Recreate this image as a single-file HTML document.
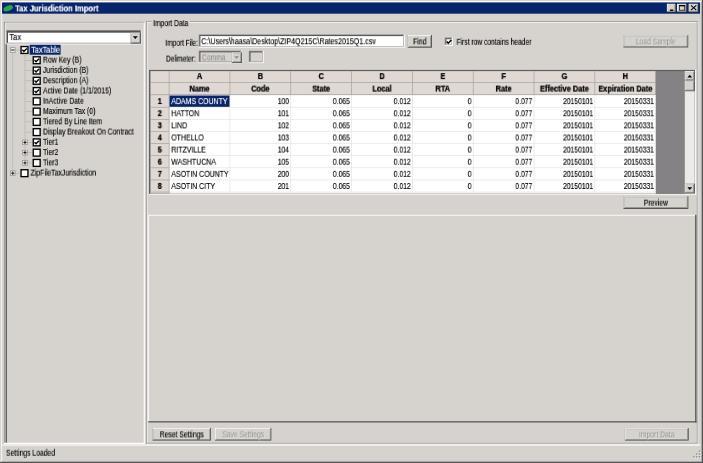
<!DOCTYPE html>
<html><head><meta charset="utf-8"><title>Tax Jurisdiction Import</title>
<style>
html,body{margin:0;padding:0;}
body{width:703px;height:463px;overflow:hidden;background:#d6d3ce;position:relative;font-family:"Liberation Sans",sans-serif;font-size:8.2px;color:#000;line-height:10px;}
svg.bgd{position:absolute;left:0;top:0;}
.t{position:absolute;left:0;top:0;white-space:nowrap;height:10px;line-height:10px;will-change:transform;text-shadow:0 0 0 rgba(0,0,0,.45);}
.b{font-weight:bold;-webkit-text-stroke:0.2px #000;}
.dis{color:#8f8d89;text-shadow:0.5px 0.5px 0 rgba(255,255,255,.6);}
</style></head>
<body>
<svg class="bgd" width="703" height="463" viewBox="0 0 703 463">
<rect x="0.00" y="0.00" width="703.00" height="463.00" fill="#d6d3ce"/>
<rect x="1.30" y="1.10" width="700.40" height="1.35" fill="#ffffff"/>
<rect x="1.30" y="1.10" width="0.80" height="460.60" fill="#ffffff"/>
<rect x="702.10" y="0.00" width="0.90" height="463.00" fill="#424142"/>
<rect x="0.00" y="462.10" width="703.00" height="0.90" fill="#424142"/>
<rect x="701.50" y="1.20" width="0.60" height="460.90" fill="#848284"/>
<rect x="1.30" y="461.50" width="700.80" height="0.60" fill="#848284"/>
<rect x="2.05" y="2.45" width="697.95" height="11.25" fill="#08246b"/>
<ellipse cx="8.2" cy="8.3" rx="5" ry="2.6" transform="rotate(-22 8.2 8.3)" fill="#1fa84a"/>
<rect x="666.90" y="3.80" width="9.10" height="8.50" fill="#383738"/>
<rect x="666.90" y="3.80" width="8.30" height="7.70" fill="#ffffff"/>
<rect x="667.80" y="4.70" width="7.40" height="6.80" fill="#7b797b"/>
<rect x="667.80" y="4.70" width="6.74" height="6.14" fill="#d6d3ce"/>
<rect x="670.00" y="9.50" width="3.30" height="1.40" fill="#000"/>
<rect x="677.10" y="3.80" width="9.80" height="8.50" fill="#383738"/>
<rect x="677.10" y="3.80" width="9.00" height="7.70" fill="#ffffff"/>
<rect x="678.00" y="4.70" width="8.10" height="6.80" fill="#7b797b"/>
<rect x="678.00" y="4.70" width="7.44" height="6.14" fill="#d6d3ce"/>
<rect x="679.5" y="5.7" width="5.2" height="4.5" fill="none" stroke="#000" stroke-width="0.7"/>
<rect x="679.15" y="5.00" width="5.90" height="1.30" fill="#000"/>
<rect x="688.70" y="3.80" width="9.80" height="8.50" fill="#383738"/>
<rect x="688.70" y="3.80" width="9.00" height="7.70" fill="#ffffff"/>
<rect x="689.60" y="4.70" width="8.10" height="6.80" fill="#7b797b"/>
<rect x="689.60" y="4.70" width="7.44" height="6.14" fill="#d6d3ce"/>
<path d="M691 5.4L696.3 10.2M696.3 5.4L691 10.2" stroke="#000" stroke-width="1.05"/>
<rect x="4.60" y="22.56" width="139.00" height="0.66" fill="#f4f3f1"/>
<rect x="4.86" y="22.50" width="0.76" height="21.30" fill="#f0efec"/>
<rect x="3.90" y="21.90" width="140.70" height="0.66" fill="#9c9a97"/>
<rect x="3.90" y="21.90" width="0.96" height="421.70" fill="#9a9896"/>
<rect x="5.60" y="43.80" width="1.30" height="399.00" fill="#5a595a"/>
<rect x="143.70" y="22.50" width="1.10" height="421.50" fill="#ffffff"/>
<rect x="3.90" y="442.80" width="140.90" height="1.20" fill="#ffffff"/>
<rect x="6.30" y="30.30" width="135.10" height="14.10" fill="#ffffff"/>
<rect x="6.30" y="30.30" width="134.15" height="13.15" fill="#7b797b"/>
<rect x="7.05" y="31.05" width="133.40" height="12.40" fill="#d6d3ce"/>
<rect x="7.05" y="31.05" width="132.74" height="11.74" fill="#4a494a"/>
<rect x="8.00" y="32.00" width="131.79" height="10.79" fill="#ffffff"/>
<rect x="6.30" y="30.30" width="134.44" height="0.90" fill="#7b797b"/>
<rect x="6.96" y="31.20" width="133.78" height="1.50" fill="#555455"/>
<rect x="130.60" y="32.70" width="10.40" height="10.80" fill="#383738"/>
<rect x="130.60" y="32.70" width="9.60" height="10.00" fill="#ffffff"/>
<rect x="131.50" y="33.60" width="8.70" height="9.10" fill="#7b797b"/>
<rect x="131.50" y="33.60" width="8.04" height="8.44" fill="#d6d3ce"/>
<polygon points="132.80,36.30 137.80,36.30 135.30,39.10" fill="#000"/>
<rect x="12.50" y="52.50" width="0.60" height="118.18" fill="#b4b1ac"/>
<rect x="24.70" y="54.50" width="0.60" height="105.92" fill="#b4b1ac"/>
<rect x="15.30" y="49.70" width="5.10" height="0.60" fill="#b4b1ac"/>
<rect x="10.50" y="47.70" width="4.6" height="4.6" fill="#f2f1ee" stroke="#8a8886" stroke-width="0.7"/>
<rect x="11.20" y="49.55" width="3.20" height="0.90" fill="#000"/>
<rect x="21.05" y="46.55" width="6.9" height="6.9" fill="#fff" stroke="#000" stroke-width="1.35"/>
<path d="M22.32 49.82L23.84 51.43L26.78 48.39" stroke="#000" stroke-width="1.42" fill="none"/>
<rect x="29.70" y="44.80" width="30.90" height="9.90" fill="#08246b"/>
<rect x="25.30" y="59.97" width="7.30" height="0.60" fill="#b4b1ac"/>
<rect x="33.25" y="56.81" width="6.9" height="6.9" fill="#fff" stroke="#000" stroke-width="1.35"/>
<path d="M34.52 60.08L36.04 61.70L38.98 58.66" stroke="#000" stroke-width="1.42" fill="none"/>
<rect x="25.30" y="70.23" width="7.30" height="0.60" fill="#b4b1ac"/>
<rect x="33.25" y="67.08" width="6.9" height="6.9" fill="#fff" stroke="#000" stroke-width="1.35"/>
<path d="M34.52 70.34L36.04 71.96L38.98 68.92" stroke="#000" stroke-width="1.42" fill="none"/>
<rect x="25.30" y="80.50" width="7.30" height="0.60" fill="#b4b1ac"/>
<rect x="33.25" y="77.35" width="6.9" height="6.9" fill="#fff" stroke="#000" stroke-width="1.35"/>
<path d="M34.52 80.61L36.04 82.22L38.98 79.19" stroke="#000" stroke-width="1.42" fill="none"/>
<rect x="25.30" y="90.76" width="7.30" height="0.60" fill="#b4b1ac"/>
<rect x="33.25" y="87.61" width="6.9" height="6.9" fill="#fff" stroke="#000" stroke-width="1.35"/>
<path d="M34.52 90.88L36.04 92.49L38.98 89.45" stroke="#000" stroke-width="1.42" fill="none"/>
<rect x="25.30" y="101.03" width="7.30" height="0.60" fill="#b4b1ac"/>
<rect x="33.25" y="97.88" width="6.9" height="6.9" fill="#fff" stroke="#000" stroke-width="1.35"/>
<rect x="25.30" y="111.29" width="7.30" height="0.60" fill="#b4b1ac"/>
<rect x="33.25" y="108.14" width="6.9" height="6.9" fill="#fff" stroke="#000" stroke-width="1.35"/>
<rect x="25.30" y="121.56" width="7.30" height="0.60" fill="#b4b1ac"/>
<rect x="33.25" y="118.41" width="6.9" height="6.9" fill="#fff" stroke="#000" stroke-width="1.35"/>
<rect x="25.30" y="131.82" width="7.30" height="0.60" fill="#b4b1ac"/>
<rect x="33.25" y="128.67" width="6.9" height="6.9" fill="#fff" stroke="#000" stroke-width="1.35"/>
<rect x="25.30" y="142.08" width="7.30" height="0.60" fill="#b4b1ac"/>
<rect x="22.70" y="140.08" width="4.6" height="4.6" fill="#f2f1ee" stroke="#8a8886" stroke-width="0.7"/>
<rect x="23.40" y="141.94" width="3.20" height="0.90" fill="#000"/>
<rect x="24.55" y="140.78" width="0.90" height="3.20" fill="#000"/>
<rect x="33.25" y="138.94" width="6.9" height="6.9" fill="#fff" stroke="#000" stroke-width="1.35"/>
<path d="M34.52 142.20L36.04 143.81L38.98 140.77" stroke="#000" stroke-width="1.42" fill="none"/>
<rect x="25.30" y="152.35" width="7.30" height="0.60" fill="#b4b1ac"/>
<rect x="22.70" y="150.35" width="4.6" height="4.6" fill="#f2f1ee" stroke="#8a8886" stroke-width="0.7"/>
<rect x="23.40" y="152.20" width="3.20" height="0.90" fill="#000"/>
<rect x="24.55" y="151.05" width="0.90" height="3.20" fill="#000"/>
<rect x="33.25" y="149.20" width="6.9" height="6.9" fill="#fff" stroke="#000" stroke-width="1.35"/>
<rect x="25.30" y="162.62" width="7.30" height="0.60" fill="#b4b1ac"/>
<rect x="22.70" y="160.62" width="4.6" height="4.6" fill="#f2f1ee" stroke="#8a8886" stroke-width="0.7"/>
<rect x="23.40" y="162.47" width="3.20" height="0.90" fill="#000"/>
<rect x="24.55" y="161.32" width="0.90" height="3.20" fill="#000"/>
<rect x="33.25" y="159.47" width="6.9" height="6.9" fill="#fff" stroke="#000" stroke-width="1.35"/>
<rect x="15.30" y="172.88" width="5.10" height="0.60" fill="#b4b1ac"/>
<rect x="10.50" y="170.88" width="4.6" height="4.6" fill="#f2f1ee" stroke="#8a8886" stroke-width="0.7"/>
<rect x="11.20" y="172.73" width="3.20" height="0.90" fill="#000"/>
<rect x="12.35" y="171.58" width="0.90" height="3.20" fill="#000"/>
<rect x="21.05" y="169.73" width="6.9" height="6.9" fill="#fff" stroke="#000" stroke-width="1.35"/>
<rect x="146.76" y="21.96" width="551.40" height="0.66" fill="#ffffff"/>
<rect x="146.76" y="21.96" width="0.66" height="422.20" fill="#ffffff"/>
<rect x="146.76" y="443.50" width="551.40" height="0.66" fill="#ffffff"/>
<rect x="697.50" y="21.96" width="0.66" height="422.20" fill="#ffffff"/>
<rect x="146.10" y="21.30" width="551.40" height="0.66" fill="#908e8b"/>
<rect x="146.10" y="21.30" width="0.66" height="422.20" fill="#908e8b"/>
<rect x="146.10" y="442.84" width="551.40" height="0.66" fill="#908e8b"/>
<rect x="696.84" y="21.30" width="0.66" height="422.20" fill="#908e8b"/>
<rect x="151.50" y="20.00" width="38.50" height="4.00" fill="#d6d3ce"/>
<rect x="198.70" y="34.40" width="206.10" height="13.20" fill="#ffffff"/>
<rect x="198.70" y="34.40" width="205.15" height="12.25" fill="#7b797b"/>
<rect x="199.45" y="35.15" width="204.40" height="11.50" fill="#d6d3ce"/>
<rect x="199.45" y="35.15" width="203.74" height="10.84" fill="#4a494a"/>
<rect x="200.40" y="36.10" width="202.79" height="9.89" fill="#ffffff"/>
<rect x="407.80" y="35.00" width="24.10" height="12.60" fill="#383738"/>
<rect x="407.80" y="35.00" width="23.30" height="11.80" fill="#ffffff"/>
<rect x="408.70" y="35.90" width="22.40" height="10.90" fill="#7b797b"/>
<rect x="408.70" y="35.90" width="21.74" height="10.24" fill="#d6d3ce"/>
<rect x="444.70" y="37.50" width="8.30" height="8.30" fill="#ffffff"/>
<rect x="444.70" y="37.50" width="7.35" height="7.35" fill="#7b797b"/>
<rect x="445.45" y="38.25" width="6.60" height="6.60" fill="#d6d3ce"/>
<rect x="445.45" y="38.25" width="5.94" height="5.94" fill="#4a494a"/>
<rect x="446.40" y="39.20" width="4.99" height="4.99" fill="#ffffff"/>
<path d="M446.65 41.50L448.25 43.20L451.35 40.00" stroke="#000" stroke-width="1.50" fill="none"/>
<rect x="623.40" y="35.30" width="64.80" height="12.10" fill="#383738"/>
<rect x="623.40" y="35.30" width="64.00" height="11.30" fill="#ffffff"/>
<rect x="624.30" y="36.20" width="63.10" height="10.40" fill="#7b797b"/>
<rect x="624.30" y="36.20" width="62.44" height="9.74" fill="#d6d3ce"/>
<rect x="198.70" y="50.60" width="43.50" height="12.60" fill="#ffffff"/>
<rect x="198.70" y="50.60" width="42.55" height="11.65" fill="#7b797b"/>
<rect x="199.45" y="51.35" width="41.80" height="10.90" fill="#d6d3ce"/>
<rect x="199.45" y="51.35" width="41.14" height="10.24" fill="#4a494a"/>
<rect x="200.40" y="52.30" width="40.19" height="9.29" fill="#d6d3ce"/>
<rect x="231.90" y="52.40" width="10.10" height="10.60" fill="#383738"/>
<rect x="231.90" y="52.40" width="9.30" height="9.80" fill="#ffffff"/>
<rect x="232.80" y="53.30" width="8.40" height="8.90" fill="#7b797b"/>
<rect x="232.80" y="53.30" width="7.74" height="8.24" fill="#d6d3ce"/>
<polygon points="234.30,56.35 238.90,56.35 236.60,58.85" fill="#8c8a86"/>
<rect x="248.80" y="50.70" width="14.90" height="12.40" fill="#ffffff"/>
<rect x="248.80" y="50.70" width="13.95" height="11.45" fill="#7b797b"/>
<rect x="249.55" y="51.45" width="13.20" height="10.70" fill="#d6d3ce"/>
<rect x="249.55" y="51.45" width="12.54" height="10.04" fill="#4a494a"/>
<rect x="250.50" y="52.40" width="11.59" height="9.09" fill="#d6d3ce"/>
<rect x="149.10" y="193.60" width="547.20" height="1.20" fill="#f6f5f3"/>
<rect x="695.00" y="69.90" width="1.30" height="124.90" fill="#f6f5f3"/>
<rect x="149.00" y="69.90" width="546.00" height="123.80" fill="#605e60"/>
<rect x="150.50" y="71.15" width="544.50" height="122.55" fill="#848284"/>
<rect x="150.50" y="71.15" width="505.16" height="23.95" fill="#dfd8d3"/>
<rect x="150.50" y="95.10" width="18.60" height="98.50" fill="#dfd8d3"/>
<rect x="169.10" y="95.10" width="486.56" height="98.50" fill="#ffffff"/>
<rect x="150.50" y="82.17" width="505.16" height="0.66" fill="#a29f9b"/>
<rect x="150.50" y="94.17" width="505.16" height="0.66" fill="#a29f9b"/>
<rect x="168.77" y="71.15" width="0.66" height="23.95" fill="#a29f9b"/>
<rect x="229.59" y="71.15" width="0.66" height="23.95" fill="#a29f9b"/>
<rect x="290.41" y="71.15" width="0.66" height="23.95" fill="#a29f9b"/>
<rect x="351.23" y="71.15" width="0.66" height="23.95" fill="#a29f9b"/>
<rect x="412.05" y="71.15" width="0.66" height="23.95" fill="#a29f9b"/>
<rect x="472.87" y="71.15" width="0.66" height="23.95" fill="#a29f9b"/>
<rect x="533.69" y="71.15" width="0.66" height="23.95" fill="#a29f9b"/>
<rect x="594.51" y="71.15" width="0.66" height="23.95" fill="#a29f9b"/>
<rect x="655.33" y="71.15" width="0.66" height="23.95" fill="#a29f9b"/>
<rect x="150.50" y="106.89" width="18.60" height="0.66" fill="#a29f9b"/>
<rect x="169.10" y="106.89" width="486.56" height="0.66" fill="#e6e1dd"/>
<rect x="150.50" y="119.01" width="18.60" height="0.66" fill="#a29f9b"/>
<rect x="169.10" y="119.01" width="486.56" height="0.66" fill="#e6e1dd"/>
<rect x="150.50" y="131.13" width="18.60" height="0.66" fill="#a29f9b"/>
<rect x="169.10" y="131.13" width="486.56" height="0.66" fill="#e6e1dd"/>
<rect x="150.50" y="143.25" width="18.60" height="0.66" fill="#a29f9b"/>
<rect x="169.10" y="143.25" width="486.56" height="0.66" fill="#e6e1dd"/>
<rect x="150.50" y="155.37" width="18.60" height="0.66" fill="#a29f9b"/>
<rect x="169.10" y="155.37" width="486.56" height="0.66" fill="#e6e1dd"/>
<rect x="150.50" y="167.49" width="18.60" height="0.66" fill="#a29f9b"/>
<rect x="169.10" y="167.49" width="486.56" height="0.66" fill="#e6e1dd"/>
<rect x="150.50" y="179.61" width="18.60" height="0.66" fill="#a29f9b"/>
<rect x="169.10" y="179.61" width="486.56" height="0.66" fill="#e6e1dd"/>
<rect x="150.50" y="191.73" width="18.60" height="0.66" fill="#a29f9b"/>
<rect x="169.10" y="191.73" width="486.56" height="0.66" fill="#e6e1dd"/>
<rect x="168.77" y="95.10" width="0.66" height="98.50" fill="#a29f9b"/>
<rect x="229.59" y="95.10" width="0.66" height="98.50" fill="#e6e1dd"/>
<rect x="290.41" y="95.10" width="0.66" height="98.50" fill="#e6e1dd"/>
<rect x="351.23" y="95.10" width="0.66" height="98.50" fill="#e6e1dd"/>
<rect x="412.05" y="95.10" width="0.66" height="98.50" fill="#e6e1dd"/>
<rect x="472.87" y="95.10" width="0.66" height="98.50" fill="#e6e1dd"/>
<rect x="533.69" y="95.10" width="0.66" height="98.50" fill="#e6e1dd"/>
<rect x="594.51" y="95.10" width="0.66" height="98.50" fill="#e6e1dd"/>
<rect x="655.33" y="95.10" width="0.66" height="98.50" fill="#e6e1dd"/>
<rect x="169.50" y="95.50" width="60.02" height="11.32" fill="#08246b"/>
<rect x="684.80" y="71.15" width="9.90" height="122.55" fill="#eceae7"/>
<rect x="684.80" y="71.15" width="9.90" height="9.45" fill="#383738"/>
<rect x="684.80" y="71.15" width="9.10" height="8.65" fill="#ffffff"/>
<rect x="685.70" y="72.05" width="8.20" height="7.75" fill="#7b797b"/>
<rect x="685.70" y="72.05" width="7.54" height="7.09" fill="#d6d3ce"/>
<polygon points="687.35,77.50 692.15,77.50 689.75,74.70" fill="#000"/>
<rect x="684.80" y="80.60" width="9.90" height="10.60" fill="#383738"/>
<rect x="684.80" y="80.60" width="9.10" height="9.80" fill="#ffffff"/>
<rect x="685.70" y="81.50" width="8.20" height="8.90" fill="#7b797b"/>
<rect x="685.70" y="81.50" width="7.54" height="8.24" fill="#d6d3ce"/>
<rect x="684.80" y="183.60" width="9.90" height="9.70" fill="#383738"/>
<rect x="684.80" y="183.60" width="9.10" height="8.90" fill="#ffffff"/>
<rect x="685.70" y="184.50" width="8.20" height="8.00" fill="#7b797b"/>
<rect x="685.70" y="184.50" width="7.54" height="7.34" fill="#d6d3ce"/>
<polygon points="687.35,187.30 692.15,187.30 689.75,190.10" fill="#000"/>
<rect x="623.50" y="196.30" width="64.80" height="12.50" fill="#383738"/>
<rect x="623.50" y="196.30" width="64.00" height="11.70" fill="#ffffff"/>
<rect x="624.40" y="197.20" width="63.10" height="10.80" fill="#7b797b"/>
<rect x="624.40" y="197.20" width="62.44" height="10.14" fill="#d6d3ce"/>
<rect x="148.20" y="214.80" width="548.30" height="0.86" fill="#ffffff"/>
<rect x="148.20" y="214.80" width="0.86" height="207.70" fill="#ffffff"/>
<rect x="695.10" y="214.80" width="1.40" height="207.70" fill="#5a595a"/>
<rect x="148.20" y="421.20" width="548.30" height="1.30" fill="#5a595a"/>
<rect x="152.50" y="428.00" width="58.50" height="12.50" fill="#383738"/>
<rect x="152.50" y="428.00" width="57.70" height="11.70" fill="#ffffff"/>
<rect x="153.40" y="428.90" width="56.80" height="10.80" fill="#7b797b"/>
<rect x="153.40" y="428.90" width="56.14" height="10.14" fill="#d6d3ce"/>
<rect x="215.00" y="428.00" width="56.30" height="12.50" fill="#383738"/>
<rect x="215.00" y="428.00" width="55.50" height="11.70" fill="#ffffff"/>
<rect x="215.90" y="428.90" width="54.60" height="10.80" fill="#7b797b"/>
<rect x="215.90" y="428.90" width="53.94" height="10.14" fill="#d6d3ce"/>
<rect x="624.90" y="428.20" width="63.70" height="12.30" fill="#383738"/>
<rect x="624.90" y="428.20" width="62.90" height="11.50" fill="#ffffff"/>
<rect x="625.80" y="429.10" width="62.00" height="10.60" fill="#7b797b"/>
<rect x="625.80" y="429.10" width="61.34" height="9.94" fill="#d6d3ce"/>
<rect x="2.50" y="444.50" width="698.00" height="1.10" fill="#ffffff"/>
<rect x="699.65" y="451.40" width="1.30" height="1.30" fill="#f7f6f4"/>
<rect x="698.85" y="450.60" width="1.40" height="1.40" fill="#8c8a86"/>
<rect x="696.90" y="454.15" width="1.30" height="1.30" fill="#f7f6f4"/>
<rect x="696.10" y="453.35" width="1.40" height="1.40" fill="#8c8a86"/>
<rect x="699.65" y="454.15" width="1.30" height="1.30" fill="#f7f6f4"/>
<rect x="698.85" y="453.35" width="1.40" height="1.40" fill="#8c8a86"/>
<rect x="694.15" y="456.90" width="1.30" height="1.30" fill="#f7f6f4"/>
<rect x="693.35" y="456.10" width="1.40" height="1.40" fill="#8c8a86"/>
<rect x="696.90" y="456.90" width="1.30" height="1.30" fill="#f7f6f4"/>
<rect x="696.10" y="456.10" width="1.40" height="1.40" fill="#8c8a86"/>
<rect x="699.65" y="456.90" width="1.30" height="1.30" fill="#f7f6f4"/>
<rect x="698.85" y="456.10" width="1.40" height="1.40" fill="#8c8a86"/>
</svg>
<div class="t" style="color:#fff;text-shadow:0 0 0 rgba(255,255,255,.6);font-weight:bold;font-size:8.5px;transform-origin:0 50%;transform:translate3d(15px,3.4px,0) scaleX(0.895);">Tax Jurisdiction Import</div>
<div class="t " style="transform-origin:0 50%;transform:translate3d(9.40px,33.10px,0) scaleX(0.9132);">Tax</div>
<div class="t " style="transform-origin:0 50%;transform:translate3d(31.20px,45.70px,0) scaleX(0.8894);color:#fff;text-shadow:0 0 0 rgba(255,255,255,.5);">TaxTable</div>
<div class="t " style="transform-origin:0 50%;transform:translate3d(43.00px,55.66px,0) scaleX(0.8371);">Row Key (B)</div>
<div class="t " style="transform-origin:0 50%;transform:translate3d(43.00px,65.93px,0) scaleX(0.8371);">Jurisdiction (B)</div>
<div class="t " style="transform-origin:0 50%;transform:translate3d(43.00px,76.20px,0) scaleX(0.8371);">Description (A)</div>
<div class="t " style="transform-origin:0 50%;transform:translate3d(43.00px,86.46px,0) scaleX(0.8371);">Active Date (1/1/2015)</div>
<div class="t " style="transform-origin:0 50%;transform:translate3d(43.00px,96.73px,0) scaleX(0.8371);">InActive Date</div>
<div class="t " style="transform-origin:0 50%;transform:translate3d(43.00px,106.99px,0) scaleX(0.8371);">Maximum Tax (0)</div>
<div class="t " style="transform-origin:0 50%;transform:translate3d(43.00px,117.26px,0) scaleX(0.8371);">Tiered By Line Item</div>
<div class="t " style="transform-origin:0 50%;transform:translate3d(43.00px,127.52px,0) scaleX(0.8371);">Display Breakout On Contract</div>
<div class="t " style="transform-origin:0 50%;transform:translate3d(43.00px,137.78px,0) scaleX(0.8371);">Tier1</div>
<div class="t " style="transform-origin:0 50%;transform:translate3d(43.00px,148.05px,0) scaleX(0.8371);">Tier2</div>
<div class="t " style="transform-origin:0 50%;transform:translate3d(43.00px,158.32px,0) scaleX(0.8371);">Tier3</div>
<div class="t " style="transform-origin:0 50%;transform:translate3d(30.60px,168.58px,0) scaleX(0.8371);">ZipFileTaxJurisdiction</div>
<div class="t " style="transform-origin:0 50%;transform:translate3d(153.20px,19.10px,0) scaleX(0.8180);">Import Data</div>
<div class="t " style="transform-origin:0 50%;transform:translate3d(165.40px,38.80px,0) scaleX(0.7943);">Import File:</div>
<div class="t " style="transform-origin:0 50%;transform:translate3d(201.30px,37.20px,0) scaleX(0.8656);">C:\Users\haasa\Desktop\ZIP4Q215C\Rates2015Q1.csv</div>
<div class="t " style="width:24.10px;text-align:center;transform-origin:50% 50%;transform:translate3d(407.80px,37.40px,0) scaleX(0.8276);">Find</div>
<div class="t " style="transform-origin:0 50%;transform:translate3d(456.60px,37.80px,0) scaleX(0.8133);">First row contains header</div>
<div class="t dis" style="width:64.80px;text-align:center;transform-origin:50% 50%;transform:translate3d(623.40px,37.45px,0) scaleX(0.8276);">Load Sample</div>
<div class="t " style="transform-origin:0 50%;transform:translate3d(166.00px,54.60px,0) scaleX(0.7943);">Delimeter:</div>
<div class="t " style="transform-origin:0 50%;transform:translate3d(201.90px,53.40px,0) scaleX(0.8276);color:#8a8885;text-shadow:none;">Comma</div>
<div class="t b" style="width:60.82px;text-align:center;transform-origin:50% 50%;transform:translate3d(169.10px,72.10px,0) scaleX(0.8989);">A</div>
<div class="t b" style="width:60.82px;text-align:center;transform-origin:50% 50%;transform:translate3d(169.10px,84.60px,0) scaleX(0.8989);">Name</div>
<div class="t b" style="width:60.82px;text-align:center;transform-origin:50% 50%;transform:translate3d(229.92px,72.10px,0) scaleX(0.8989);">B</div>
<div class="t b" style="width:60.82px;text-align:center;transform-origin:50% 50%;transform:translate3d(229.92px,84.60px,0) scaleX(0.8989);">Code</div>
<div class="t b" style="width:60.82px;text-align:center;transform-origin:50% 50%;transform:translate3d(290.74px,72.10px,0) scaleX(0.8989);">C</div>
<div class="t b" style="width:60.82px;text-align:center;transform-origin:50% 50%;transform:translate3d(290.74px,84.60px,0) scaleX(0.8989);">State</div>
<div class="t b" style="width:60.82px;text-align:center;transform-origin:50% 50%;transform:translate3d(351.56px,72.10px,0) scaleX(0.8989);">D</div>
<div class="t b" style="width:60.82px;text-align:center;transform-origin:50% 50%;transform:translate3d(351.56px,84.60px,0) scaleX(0.8989);">Local</div>
<div class="t b" style="width:60.82px;text-align:center;transform-origin:50% 50%;transform:translate3d(412.38px,72.10px,0) scaleX(0.8989);">E</div>
<div class="t b" style="width:60.82px;text-align:center;transform-origin:50% 50%;transform:translate3d(412.38px,84.60px,0) scaleX(0.8989);">RTA</div>
<div class="t b" style="width:60.82px;text-align:center;transform-origin:50% 50%;transform:translate3d(473.20px,72.10px,0) scaleX(0.8989);">F</div>
<div class="t b" style="width:60.82px;text-align:center;transform-origin:50% 50%;transform:translate3d(473.20px,84.60px,0) scaleX(0.8989);">Rate</div>
<div class="t b" style="width:60.82px;text-align:center;transform-origin:50% 50%;transform:translate3d(534.02px,72.10px,0) scaleX(0.8989);">G</div>
<div class="t b" style="width:60.82px;text-align:center;transform-origin:50% 50%;transform:translate3d(534.02px,84.60px,0) scaleX(0.8989);">Effective Date</div>
<div class="t b" style="width:60.82px;text-align:center;transform-origin:50% 50%;transform:translate3d(594.84px,72.10px,0) scaleX(0.8989);">H</div>
<div class="t b" style="width:60.82px;text-align:center;transform-origin:50% 50%;transform:translate3d(594.84px,84.60px,0) scaleX(0.8989);">Expiration Date</div>
<div class="t b" style="width:18.60px;text-align:center;transform-origin:50% 50%;transform:translate3d(150.50px,97.05px,0) scaleX(0.8989);">1</div>
<div class="t " style="transform-origin:0 50%;transform:translate3d(171.30px,97.10px,0) scaleX(0.8513);color:#fff;text-shadow:0 0 0 rgba(255,255,255,.5);">ADAMS COUNTY</div>
<div class="t " style="width:59.12px;text-align:right;transform-origin:100% 50%;transform:translate3d(229.92px,97.10px,0) scaleX(0.8276);">100</div>
<div class="t " style="width:59.12px;text-align:right;transform-origin:100% 50%;transform:translate3d(290.74px,97.10px,0) scaleX(0.8276);">0.065</div>
<div class="t " style="width:59.12px;text-align:right;transform-origin:100% 50%;transform:translate3d(351.56px,97.10px,0) scaleX(0.8276);">0.012</div>
<div class="t " style="width:59.12px;text-align:right;transform-origin:100% 50%;transform:translate3d(412.38px,97.10px,0) scaleX(0.8276);">0</div>
<div class="t " style="width:59.12px;text-align:right;transform-origin:100% 50%;transform:translate3d(473.20px,97.10px,0) scaleX(0.8276);">0.077</div>
<div class="t " style="width:59.12px;text-align:right;transform-origin:100% 50%;transform:translate3d(534.02px,97.10px,0) scaleX(0.8276);">20150101</div>
<div class="t " style="width:59.12px;text-align:right;transform-origin:100% 50%;transform:translate3d(594.84px,97.10px,0) scaleX(0.8276);">20150331</div>
<div class="t b" style="width:18.60px;text-align:center;transform-origin:50% 50%;transform:translate3d(150.50px,109.17px,0) scaleX(0.8989);">2</div>
<div class="t " style="transform-origin:0 50%;transform:translate3d(171.30px,109.22px,0) scaleX(0.8513);">HATTON</div>
<div class="t " style="width:59.12px;text-align:right;transform-origin:100% 50%;transform:translate3d(229.92px,109.22px,0) scaleX(0.8276);">101</div>
<div class="t " style="width:59.12px;text-align:right;transform-origin:100% 50%;transform:translate3d(290.74px,109.22px,0) scaleX(0.8276);">0.065</div>
<div class="t " style="width:59.12px;text-align:right;transform-origin:100% 50%;transform:translate3d(351.56px,109.22px,0) scaleX(0.8276);">0.012</div>
<div class="t " style="width:59.12px;text-align:right;transform-origin:100% 50%;transform:translate3d(412.38px,109.22px,0) scaleX(0.8276);">0</div>
<div class="t " style="width:59.12px;text-align:right;transform-origin:100% 50%;transform:translate3d(473.20px,109.22px,0) scaleX(0.8276);">0.077</div>
<div class="t " style="width:59.12px;text-align:right;transform-origin:100% 50%;transform:translate3d(534.02px,109.22px,0) scaleX(0.8276);">20150101</div>
<div class="t " style="width:59.12px;text-align:right;transform-origin:100% 50%;transform:translate3d(594.84px,109.22px,0) scaleX(0.8276);">20150331</div>
<div class="t b" style="width:18.60px;text-align:center;transform-origin:50% 50%;transform:translate3d(150.50px,121.29px,0) scaleX(0.8989);">3</div>
<div class="t " style="transform-origin:0 50%;transform:translate3d(171.30px,121.34px,0) scaleX(0.8513);">LIND</div>
<div class="t " style="width:59.12px;text-align:right;transform-origin:100% 50%;transform:translate3d(229.92px,121.34px,0) scaleX(0.8276);">102</div>
<div class="t " style="width:59.12px;text-align:right;transform-origin:100% 50%;transform:translate3d(290.74px,121.34px,0) scaleX(0.8276);">0.065</div>
<div class="t " style="width:59.12px;text-align:right;transform-origin:100% 50%;transform:translate3d(351.56px,121.34px,0) scaleX(0.8276);">0.012</div>
<div class="t " style="width:59.12px;text-align:right;transform-origin:100% 50%;transform:translate3d(412.38px,121.34px,0) scaleX(0.8276);">0</div>
<div class="t " style="width:59.12px;text-align:right;transform-origin:100% 50%;transform:translate3d(473.20px,121.34px,0) scaleX(0.8276);">0.077</div>
<div class="t " style="width:59.12px;text-align:right;transform-origin:100% 50%;transform:translate3d(534.02px,121.34px,0) scaleX(0.8276);">20150101</div>
<div class="t " style="width:59.12px;text-align:right;transform-origin:100% 50%;transform:translate3d(594.84px,121.34px,0) scaleX(0.8276);">20150331</div>
<div class="t b" style="width:18.60px;text-align:center;transform-origin:50% 50%;transform:translate3d(150.50px,133.41px,0) scaleX(0.8989);">4</div>
<div class="t " style="transform-origin:0 50%;transform:translate3d(171.30px,133.46px,0) scaleX(0.8513);">OTHELLO</div>
<div class="t " style="width:59.12px;text-align:right;transform-origin:100% 50%;transform:translate3d(229.92px,133.46px,0) scaleX(0.8276);">103</div>
<div class="t " style="width:59.12px;text-align:right;transform-origin:100% 50%;transform:translate3d(290.74px,133.46px,0) scaleX(0.8276);">0.065</div>
<div class="t " style="width:59.12px;text-align:right;transform-origin:100% 50%;transform:translate3d(351.56px,133.46px,0) scaleX(0.8276);">0.012</div>
<div class="t " style="width:59.12px;text-align:right;transform-origin:100% 50%;transform:translate3d(412.38px,133.46px,0) scaleX(0.8276);">0</div>
<div class="t " style="width:59.12px;text-align:right;transform-origin:100% 50%;transform:translate3d(473.20px,133.46px,0) scaleX(0.8276);">0.077</div>
<div class="t " style="width:59.12px;text-align:right;transform-origin:100% 50%;transform:translate3d(534.02px,133.46px,0) scaleX(0.8276);">20150101</div>
<div class="t " style="width:59.12px;text-align:right;transform-origin:100% 50%;transform:translate3d(594.84px,133.46px,0) scaleX(0.8276);">20150331</div>
<div class="t b" style="width:18.60px;text-align:center;transform-origin:50% 50%;transform:translate3d(150.50px,145.53px,0) scaleX(0.8989);">5</div>
<div class="t " style="transform-origin:0 50%;transform:translate3d(171.30px,145.58px,0) scaleX(0.8513);">RITZVILLE</div>
<div class="t " style="width:59.12px;text-align:right;transform-origin:100% 50%;transform:translate3d(229.92px,145.58px,0) scaleX(0.8276);">104</div>
<div class="t " style="width:59.12px;text-align:right;transform-origin:100% 50%;transform:translate3d(290.74px,145.58px,0) scaleX(0.8276);">0.065</div>
<div class="t " style="width:59.12px;text-align:right;transform-origin:100% 50%;transform:translate3d(351.56px,145.58px,0) scaleX(0.8276);">0.012</div>
<div class="t " style="width:59.12px;text-align:right;transform-origin:100% 50%;transform:translate3d(412.38px,145.58px,0) scaleX(0.8276);">0</div>
<div class="t " style="width:59.12px;text-align:right;transform-origin:100% 50%;transform:translate3d(473.20px,145.58px,0) scaleX(0.8276);">0.077</div>
<div class="t " style="width:59.12px;text-align:right;transform-origin:100% 50%;transform:translate3d(534.02px,145.58px,0) scaleX(0.8276);">20150101</div>
<div class="t " style="width:59.12px;text-align:right;transform-origin:100% 50%;transform:translate3d(594.84px,145.58px,0) scaleX(0.8276);">20150331</div>
<div class="t b" style="width:18.60px;text-align:center;transform-origin:50% 50%;transform:translate3d(150.50px,157.65px,0) scaleX(0.8989);">6</div>
<div class="t " style="transform-origin:0 50%;transform:translate3d(171.30px,157.70px,0) scaleX(0.8513);">WASHTUCNA</div>
<div class="t " style="width:59.12px;text-align:right;transform-origin:100% 50%;transform:translate3d(229.92px,157.70px,0) scaleX(0.8276);">105</div>
<div class="t " style="width:59.12px;text-align:right;transform-origin:100% 50%;transform:translate3d(290.74px,157.70px,0) scaleX(0.8276);">0.065</div>
<div class="t " style="width:59.12px;text-align:right;transform-origin:100% 50%;transform:translate3d(351.56px,157.70px,0) scaleX(0.8276);">0.012</div>
<div class="t " style="width:59.12px;text-align:right;transform-origin:100% 50%;transform:translate3d(412.38px,157.70px,0) scaleX(0.8276);">0</div>
<div class="t " style="width:59.12px;text-align:right;transform-origin:100% 50%;transform:translate3d(473.20px,157.70px,0) scaleX(0.8276);">0.077</div>
<div class="t " style="width:59.12px;text-align:right;transform-origin:100% 50%;transform:translate3d(534.02px,157.70px,0) scaleX(0.8276);">20150101</div>
<div class="t " style="width:59.12px;text-align:right;transform-origin:100% 50%;transform:translate3d(594.84px,157.70px,0) scaleX(0.8276);">20150331</div>
<div class="t b" style="width:18.60px;text-align:center;transform-origin:50% 50%;transform:translate3d(150.50px,169.77px,0) scaleX(0.8989);">7</div>
<div class="t " style="transform-origin:0 50%;transform:translate3d(171.30px,169.82px,0) scaleX(0.8513);">ASOTIN COUNTY</div>
<div class="t " style="width:59.12px;text-align:right;transform-origin:100% 50%;transform:translate3d(229.92px,169.82px,0) scaleX(0.8276);">200</div>
<div class="t " style="width:59.12px;text-align:right;transform-origin:100% 50%;transform:translate3d(290.74px,169.82px,0) scaleX(0.8276);">0.065</div>
<div class="t " style="width:59.12px;text-align:right;transform-origin:100% 50%;transform:translate3d(351.56px,169.82px,0) scaleX(0.8276);">0.012</div>
<div class="t " style="width:59.12px;text-align:right;transform-origin:100% 50%;transform:translate3d(412.38px,169.82px,0) scaleX(0.8276);">0</div>
<div class="t " style="width:59.12px;text-align:right;transform-origin:100% 50%;transform:translate3d(473.20px,169.82px,0) scaleX(0.8276);">0.077</div>
<div class="t " style="width:59.12px;text-align:right;transform-origin:100% 50%;transform:translate3d(534.02px,169.82px,0) scaleX(0.8276);">20150101</div>
<div class="t " style="width:59.12px;text-align:right;transform-origin:100% 50%;transform:translate3d(594.84px,169.82px,0) scaleX(0.8276);">20150331</div>
<div class="t b" style="width:18.60px;text-align:center;transform-origin:50% 50%;transform:translate3d(150.50px,181.89px,0) scaleX(0.8989);">8</div>
<div class="t " style="transform-origin:0 50%;transform:translate3d(171.30px,181.94px,0) scaleX(0.8513);">ASOTIN CITY</div>
<div class="t " style="width:59.12px;text-align:right;transform-origin:100% 50%;transform:translate3d(229.92px,181.94px,0) scaleX(0.8276);">201</div>
<div class="t " style="width:59.12px;text-align:right;transform-origin:100% 50%;transform:translate3d(290.74px,181.94px,0) scaleX(0.8276);">0.065</div>
<div class="t " style="width:59.12px;text-align:right;transform-origin:100% 50%;transform:translate3d(351.56px,181.94px,0) scaleX(0.8276);">0.012</div>
<div class="t " style="width:59.12px;text-align:right;transform-origin:100% 50%;transform:translate3d(412.38px,181.94px,0) scaleX(0.8276);">0</div>
<div class="t " style="width:59.12px;text-align:right;transform-origin:100% 50%;transform:translate3d(473.20px,181.94px,0) scaleX(0.8276);">0.077</div>
<div class="t " style="width:59.12px;text-align:right;transform-origin:100% 50%;transform:translate3d(534.02px,181.94px,0) scaleX(0.8276);">20150101</div>
<div class="t " style="width:59.12px;text-align:right;transform-origin:100% 50%;transform:translate3d(594.84px,181.94px,0) scaleX(0.8276);">20150331</div>
<div class="t " style="width:64.80px;text-align:center;transform-origin:50% 50%;transform:translate3d(623.50px,198.65px,0) scaleX(0.8276);">Preview</div>
<div class="t " style="width:58.50px;text-align:center;transform-origin:50% 50%;transform:translate3d(152.50px,430.35px,0) scaleX(0.8276);">Reset Settings</div>
<div class="t dis" style="width:56.30px;text-align:center;transform-origin:50% 50%;transform:translate3d(215.00px,430.35px,0) scaleX(0.8276);">Save Settings</div>
<div class="t dis" style="width:63.70px;text-align:center;transform-origin:50% 50%;transform:translate3d(624.90px,430.45px,0) scaleX(0.8276);">Import Data</div>
<div class="t " style="transform-origin:0 50%;transform:translate3d(6.00px,448.70px,0) scaleX(0.8276);">Settings Loaded</div>
</body></html>
